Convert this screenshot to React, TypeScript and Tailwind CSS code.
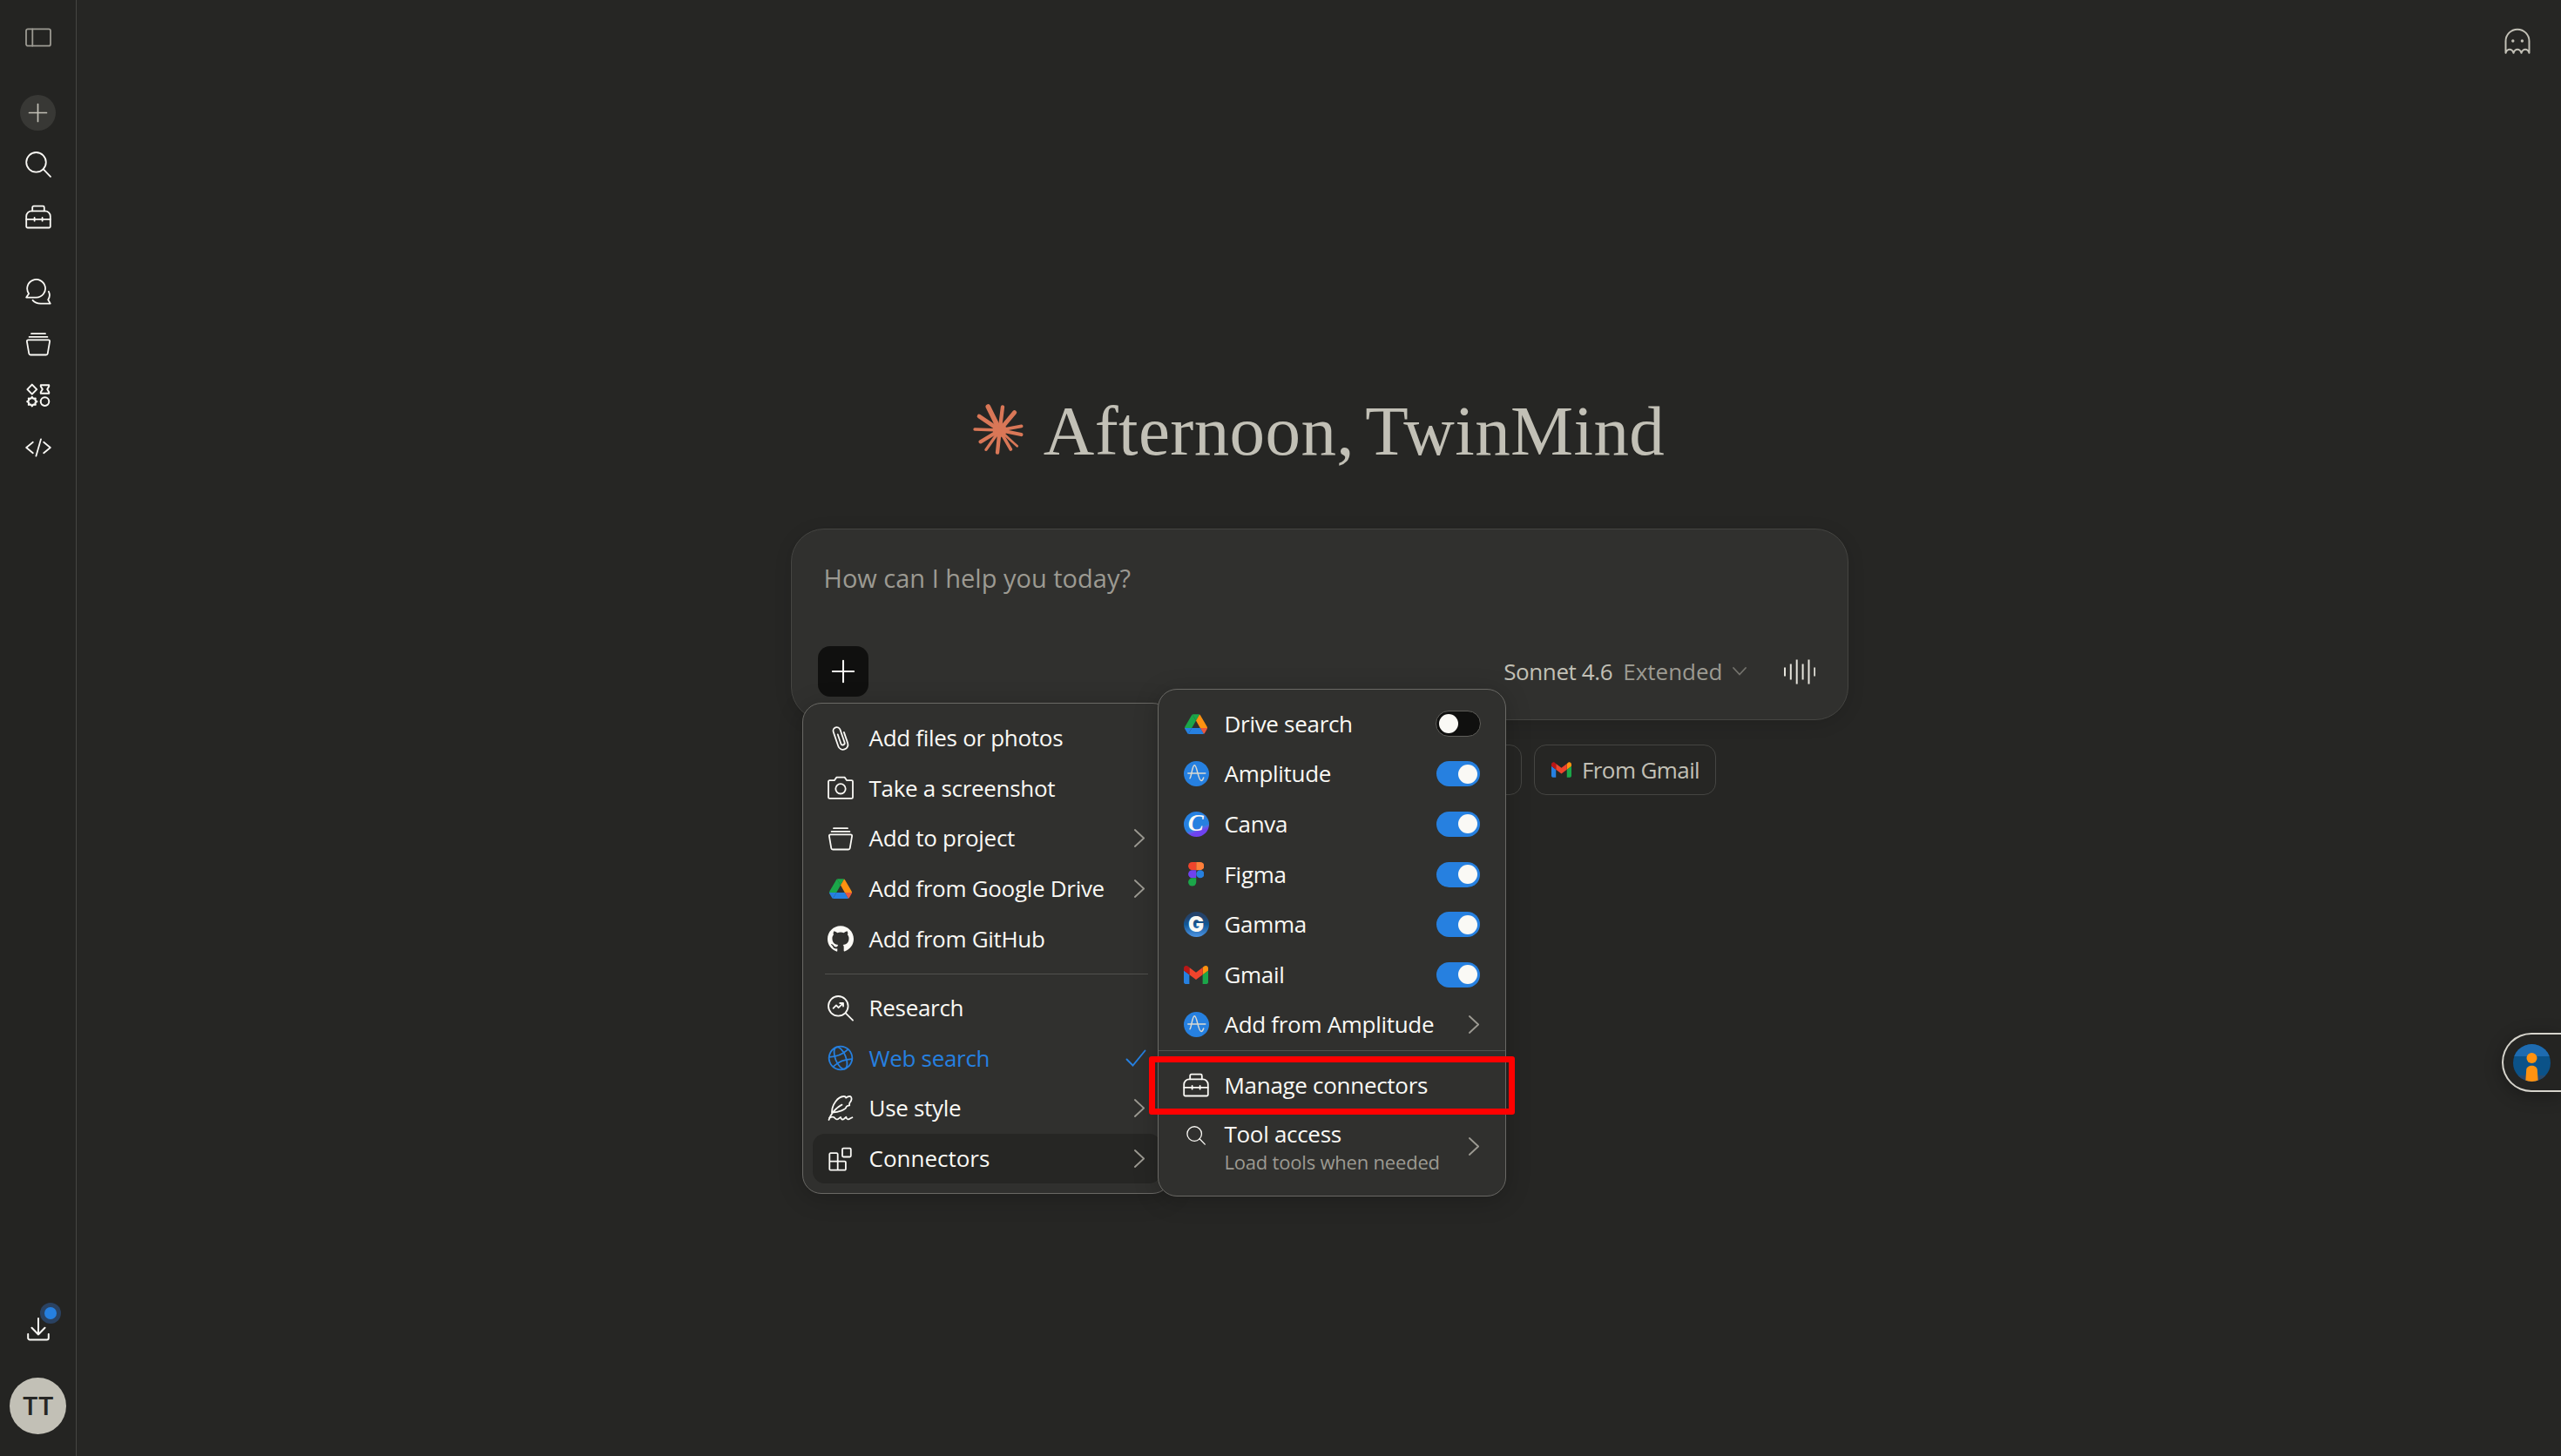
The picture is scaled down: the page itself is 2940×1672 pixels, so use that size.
import React from 'react';
import { SiGithub } from 'react-icons/si';

type IconProps = { className?: string };

const Stroke = ({
  children,
  className = 'size-[30px]',
  width = 1.8,
}: {
  children: React.ReactNode;
  className?: string;
  width?: number;
}) => (
  <svg
    viewBox="0 0 30 30"
    fill="none"
    stroke="currentColor"
    strokeWidth={width}
    strokeLinecap="round"
    strokeLinejoin="round"
    className={`shrink-0 ${className}`}
  >
    {children}
  </svg>
);

const PanelIcon = () => (
  <Stroke>
    <rect x="1" y="5.3" width="28" height="19.4" rx="2" />
    <path d="M8.3 5.3v19.4" />
  </Stroke>
);

const PlusIcon = ({ className }: IconProps) => (
  <Stroke className={className} width={2.2}>
    <path d="M15 2v26M2 15h26" />
  </Stroke>
);

const SearchIcon = ({ className }: IconProps) => (
  <Stroke className={className}>
    <circle cx="12.5" cy="12.3" r="11.3" />
    <path d="M20.6 20.2l8.4 8.6" />
  </Stroke>
);

const ToolboxIcon = () => (
  <Stroke>
    <path d="M1.2 14.3a6 6 0 0 1 6-6h15.6a6 6 0 0 1 6 6V26a1.5 1.5 0 0 1-1.5 1.5H2.7A1.5 1.5 0 0 1 1.2 26z" />
    <path d="M8.2 8.3V4.2a1.5 1.5 0 0 1 1.5-1.5h10.6a1.5 1.5 0 0 1 1.5 1.5v4.1M1.2 17.8h27.6M10.6 15.9v3.8M19.6 15.9v3.8" />
  </Stroke>
);

const ChatsIcon = () => (
  <Stroke>
    <path d="M12.7 21.6H1.2l2.9-4.4A10.4 10.3 0 1 1 12.7 21.6z" />
    <path d="M8.6 24.8c2.2 2.6 5.2 3.8 9 3.8h11.2l-2.6-4.4c2-3 2.2-6.4.7-9.4" />
  </Stroke>
);

const ProjectsIcon = () => (
  <Stroke>
    <path d="M7 3.2h16M4.6 6.9h20.8M3.4 10.4h23.2c1 0 1.6.8 1.5 1.7l-2.4 14a1.8 1.8 0 0 1-1.8 1.4H6.1a1.8 1.8 0 0 1-1.8-1.4l-2.4-14c-.1-.9.5-1.7 1.5-1.7z" />
  </Stroke>
);

const ArtifactsIcon = () => (
  <Stroke width={2}>
    <path d="M7.8 2.6l5.4 5.5-5.4 5.5-5.4-5.5zM17.8 3.2h9.4v1.6l-2 3.2 2 3.2v1.6h-9.4v-1.6l2-3.2-2-3.2z" />
    <path d="M7.8 16.8l1.5 2 2.5-.4-.4 2.3 2 1.4-2 1.4.4 2.3-2.5-.4-1.5 2-1.5-2-2.5.4.4-2.3-2-1.4 2-1.4-.4-2.3 2.5.4z" />
    <circle cx="22.5" cy="22.1" r="4.8" />
  </Stroke>
);

const CodeIcon = () => (
  <Stroke>
    <path d="M8.8 8.8L1.2 15l7.6 6.2M21.2 8.8l7.6 6.2-7.6 6.2M18 5.3l-5.6 19.4" />
  </Stroke>
);

const DownloadIcon = () => (
  <Stroke width={2}>
    <path d="M15 2v18.5M7.5 12.8l7.5 7.7 7.5-7.7M3.2 20v4.5a2 2 0 0 0 2 2h19.6a2 2 0 0 0 2-2V20" />
  </Stroke>
);

const GhostIcon = () => (
  <Stroke width={2}>
    <path d="M1.5 28.8V15.2a13.5 13.5 0 0 1 27 0v13.6c-2-5.3-7-5.3-9 0-2-5.3-7-5.3-9 0-2-5.3-7-5.3-9 0z" />
    <circle cx="9.8" cy="15" r="1" fill="currentColor" strokeWidth="1.4" />
    <circle cx="20.4" cy="15" r="1" fill="currentColor" strokeWidth="1.4" />
  </Stroke>
);

const ClipIcon = () => (
  <Stroke>
    <path
      transform="rotate(-19 15 15)"
      d="M21 9.5V22.6a5.7 5.7 0 0 1-11.4 0V5.2a4.1 4.1 0 0 1 8.2 0v15.6a2.2 2.2 0 0 1-4.4 0V9.5"
    />
  </Stroke>
);

const CameraIcon = () => (
  <Stroke>
    <path d="M2.4 6.2h5.4l2.6-3.6h9.2l2.6 3.6h5.4c.8 0 1.4.6 1.4 1.4v17.8c0 .8-.6 1.4-1.4 1.4H2.4c-.8 0-1.4-.6-1.4-1.4V7.6c0-.8.6-1.4 1.4-1.4z" />
    <circle cx="15" cy="15.8" r="5.7" />
  </Stroke>
);

const ResearchIcon = () => (
  <Stroke>
    <circle cx="12.3" cy="12.3" r="11.3" />
    <path d="M20.7 20.4l8.3 8.3M6.6 14.8l3.4-3.4 2.6 2.8 5.2-5M14.2 9h3.8v3.6" />
  </Stroke>
);

const GlobeIcon = () => (
  <Stroke>
    <g transform="rotate(-22 15 15)">
      <circle cx="15" cy="15" r="13.3" />
      <ellipse cx="15" cy="15" rx="6" ry="13.3" />
      <path d="M3.4 9c7.4 2.8 15.8 2.8 23.2 0M3.4 21c7.4-2.8 15.8-2.8 23.2 0" />
    </g>
  </Stroke>
);

const StyleIcon = () => (
  <Stroke>
    <path d="M1.5 28c2.4-7.2 7-13 15-17.4M5 19.4C4.8 10.5 12 1.2 18.4 1c1.7-.1 2.4.5 2.8 1.7 1.5-1.2 3.4-1.9 5-1.6 2.2 1.4 1.6 5-.8 7.3-.4 1.4-.5 2-.2 3-2.5.4-3.3.9-3.6 1.5-.4 3.5-8.6 6.2-16.5 6.8" />
    <path d="M2.2 25.6c2.5-1.3 5.3-1.2 6.5.6 1.2 1.5 2.8 1.7 4 .4l2.3-1.7c.5 2.5 2.2 3.3 4 1.9l2.4-2c.5 2.7 2.6 3.3 4.4 1.7l2.6-1.2" />
  </Stroke>
);

const BlocksIcon = () => (
  <Stroke>
    <path d="M3.5 8.2h7a1.2 1.2 0 0 1 1.2 1.2v8.2h8a1.2 1.2 0 0 1 1.2 1.2v7.6a1.2 1.2 0 0 1-1.2 1.2H3.5a1.2 1.2 0 0 1-1.2-1.2v-17a1.2 1.2 0 0 1 1.2-1.2zM2.3 17.6h9.4v10" />
    <rect x="17" y="2.7" width="9.8" height="9.8" rx="1.2" />
  </Stroke>
);

const ChevronRight = () => (
  <svg viewBox="0 0 12 21" fill="none" stroke="currentColor" strokeWidth="1.8" strokeLinecap="round" className="h-[21px] w-3 text-[#9c9a92]">
    <path d="M.9 1l10.2 9.5L.9 20" />
  </svg>
);

const DriveLogo = () => (
  <svg viewBox="0 0 87.3 78" className="h-[23.5px] w-[26px]">
    <path fill="#2680e0" d="m6.6 66.85 3.85 6.65c.8 1.4 1.95 2.5 3.3 3.3l13.75-23.8h-27.5c0 1.55.4 3.1 1.2 4.5z" />
    <path fill="#1ba649" d="m43.65 25-13.75-23.8c-1.35.8-2.5 1.9-3.3 3.3l-25.4 44a9.06 9.06 0 0 0-1.2 4.5h27.5z" />
    <path fill="#e8573f" d="m73.55 76.8c1.35-.8 2.5-1.9 3.3-3.3l1.6-2.75 7.65-13.25c.8-1.4 1.2-2.95 1.2-4.5h-27.5l5.85 11.5z" />
    <path fill="#1ba649" d="m43.65 25 13.75-23.8c-1.35-.8-2.9-1.2-4.5-1.2h-18.5c-1.6 0-3.15.45-4.5 1.2z" />
    <path fill="#2680e0" d="m59.8 53h-32.3l-13.75 23.8c1.35.8 2.9 1.2 4.5 1.2h50.8c1.6 0 3.15-.45 4.5-1.2z" />
    <path fill="#ff9210" d="m73.4 26.5-12.7-22c-.8-1.4-1.95-2.5-3.3-3.3l-13.75 23.8 16.15 28h27.45c0-1.55-.4-3.1-1.2-4.5z" />
  </svg>
);

const AmplitudeLogo = () => (
  <svg viewBox="0 0 29 29" fill="none" stroke="#dcdad2" strokeWidth="1.5" strokeLinecap="round" className="size-[29px]">
    <circle cx="14.5" cy="14.5" r="14.5" fill="#2680e0" stroke="none" />
    <path d="M4.8 14h20M7 19.8C8.8 18 9.6 4.8 12.3 4.8c3 0 4 17.6 7.8 17.6 1.2 0 2-1.6 2.6-3.4" />
  </svg>
);

const CanvaLogo = () => (
  <span className="flex size-[29px] items-center justify-center rounded-full bg-linear-160 from-[#2680e0] from-62% to-[#6f42f0] to-74% pr-px pb-[2px] font-['Liberation_Serif',serif] text-[27px] leading-none font-bold text-[#faf9f5] italic">
    C
  </span>
);

const FigmaLogo = () => (
  <svg viewBox="0 0 18 27" className="h-[27.5px] w-[18.5px]">
    <path fill="#f0442c" d="M9 0H4.5a4.5 4.5 0 0 0 0 9H9z" />
    <path fill="#ff7f3a" d="M9 0h4.5a4.5 4.5 0 0 1 0 9H9z" />
    <path fill="#6f42f0" d="M9 9H4.5a4.5 4.5 0 0 0 0 9H9z" />
    <circle cx="13.5" cy="13.5" r="4.5" fill="#2680e0" />
    <path fill="#1ba649" d="M9 18H4.5A4.5 4.5 0 1 0 9 22.5z" />
  </svg>
);

const GammaLogo = () => (
  <span className="flex size-[29px] items-center justify-center rounded-full bg-linear-to-b from-[#24436b] from-20% via-[#0f5796] via-50% to-[#4d96e6] font-[Inter] text-[24px] leading-none font-black text-[#faf9f5]">
    G
  </span>
);

const GmailLogo = ({ className = 'h-[21px] w-7' }: IconProps) => (
  <svg viewBox="52 42 88 66" className={className}>
    <path fill="#2680e0" d="M58 108h14V74L52 59v43c0 3.32 2.69 6 6 6" />
    <path fill="#1ba649" d="M120 108h14c3.32 0 6-2.69 6-6V59l-20 15" />
    <path fill="#ff9210" d="M120 48v26l20-15v-8c0-7.42-8.47-11.65-14.4-7.2" />
    <path fill="#f0442c" d="M72 74V48l24 18 24-18v26L96 92" />
    <path fill="#b91616" d="M52 51v8l20 15V48l-5.6-4.2c-5.94-4.45-14.4-.22-14.4 7.2" />
  </svg>
);

const rays = [
  [90, 37, 17],
  [140, 38, 13],
  [181, 57, 15],
  [205, 104, 11],
  [204, 133, 13],
  [190, 173, 8],
  [168, 184, 11],
  [122, 195, 13],
  [83, 185, 10],
  [64, 158, 13],
  [44, 115, 10],
  [59, 70, 14],
];

const Starburst = () => (
  <svg viewBox="38 28 174 174" stroke="#d97757" strokeLinecap="round" className="size-[58px] shrink-0">
    <circle cx="130" cy="118" r="24" fill="#d97757" stroke="none" />
    {rays.map(([x, y, w]) => (
      <line key={`${x}-${y}`} x1="130" y1="118" x2={x} y2={y} strokeWidth={w} />
    ))}
  </svg>
);

const Toggle = ({ on }: { on: boolean }) =>
  on ? (
    <span className="flex h-[29px] w-[50px] items-center justify-end rounded-full bg-[#2680e0] pr-[3px]">
      <span className="size-[22px] rounded-full bg-[#faf9f5]" />
    </span>
  ) : (
    <span className="flex h-[30px] w-[52px] items-center rounded-full border border-[#5f5e5a] bg-[#10100f] pl-[3px]">
      <span className="size-[22px] rounded-full bg-[#faf9f5]" />
    </span>
  );

const SideButton = ({ children }: { children: React.ReactNode }) => (
  <button className="flex h-[59.5px] w-full items-center justify-center">{children}</button>
);

const Sidebar = () => (
  <aside className="flex h-full w-[88px] shrink-0 flex-col items-center border-r border-[#454542] bg-[#242422] pt-[13px] pb-[25px] text-[#faf9f5]">
    <div className="w-full text-[#9c9a92]">
      <SideButton>
        <PanelIcon />
      </SideButton>
    </div>
    <nav className="mt-[27.5px] w-full">
      <SideButton>
        <span className="flex size-[41px] items-center justify-center rounded-full bg-[#383835] text-[#c2c0b6]">
          <PlusIcon className="size-[23px]" />
        </span>
      </SideButton>
      <SideButton>
        <SearchIcon />
      </SideButton>
      <SideButton>
        <ToolboxIcon />
      </SideButton>
    </nav>
    <nav className="mt-[27px] w-full">
      <SideButton>
        <ChatsIcon />
      </SideButton>
      <SideButton>
        <ProjectsIcon />
      </SideButton>
      <SideButton>
        <ArtifactsIcon />
      </SideButton>
      <SideButton>
        <CodeIcon />
      </SideButton>
    </nav>
    <button className="relative mt-auto mb-[40px]">
      <DownloadIcon />
      <span className="absolute -top-[16px] left-[17px] size-6 rounded-full bg-[#2a4262] p-[5px]">
        <span className="block size-full rounded-full bg-[#2680e0]" />
      </span>
    </button>
    <div className="flex size-[65px] items-center justify-center rounded-full bg-[#c2c0b6] font-[Inter] text-[28px] font-semibold tracking-[-0.5px] text-[#262624]">
      TT
    </div>
  </aside>
);

const MenuRow = ({
  icon,
  label,
  end,
  className = 'text-[#faf9f5]',
}: {
  icon: React.ReactNode;
  label: string;
  end?: React.ReactNode;
  className?: string;
}) => (
  <div className={`flex h-[57.6px] items-center rounded-[14px] pl-[17px] ${className}`}>
    <span className="flex w-[30px] justify-center">{icon}</span>
    <span className="ml-[17.5px] flex-1 whitespace-nowrap">{label}</span>
    {end}
  </div>
);

const Arrow = () => (
  <span className="mr-[19px]">
    <ChevronRight />
  </span>
);

const AttachMenu = () => (
  <div className="absolute top-[200px] left-[13px] h-[564px] w-[424px] rounded-[22px] border border-[#6a6965] bg-[#30302e] p-[11px] text-[26px] tracking-[-0.3px] shadow-[0_4px_28px_rgba(0,0,0,0.22)]">
    <MenuRow icon={<ClipIcon />} label="Add files or photos" />
    <MenuRow icon={<CameraIcon />} label="Take a screenshot" />
    <MenuRow icon={<ProjectsIcon />} label="Add to project" end={<Arrow />} />
    <MenuRow icon={<DriveLogo />} label="Add from Google Drive" end={<Arrow />} />
    <MenuRow icon={<SiGithub size={30} />} label="Add from GitHub" />
    <hr className="mt-[11px] mr-[15px] mb-[10px] ml-[14px] border-[#51514e]" />
    <MenuRow icon={<ResearchIcon />} label="Research" />
    <MenuRow
      icon={<GlobeIcon />}
      label="Web search"
      className="text-[#2680e0]"
      end={
        <svg viewBox="0 0 24 20" fill="none" stroke="currentColor" strokeWidth="1.9" strokeLinecap="round" className="mr-[17px] h-5 w-6">
          <path d="M1.5 11.5l7 7L22.5 1.5" />
        </svg>
      }
    />
    <MenuRow icon={<StyleIcon />} label="Use style" end={<Arrow />} />
    <MenuRow icon={<BlocksIcon />} label="Connectors" end={<Arrow />} className="bg-[#262624] tracking-normal text-[#faf9f5]" />
  </div>
);

const connectors = [
  { label: 'Drive search', icon: <DriveLogo />, on: false },
  { label: 'Amplitude', icon: <AmplitudeLogo />, on: true },
  { label: 'Canva', icon: <CanvaLogo />, on: true },
  { label: 'Figma', icon: <FigmaLogo />, on: true },
  { label: 'Gamma', icon: <GammaLogo />, on: true },
  { label: 'Gmail', icon: <GmailLogo />, on: true },
];

const ConnectorsMenu = () => (
  <div className="absolute top-[184px] left-[421px] h-[583px] w-[400px] rounded-[22px] border border-[#6a6965] bg-[#30302e] py-[10.5px] text-[26px] tracking-[-0.3px] text-[#faf9f5] shadow-[0_4px_28px_rgba(0,0,0,0.22)]">
    <div className="px-[11px]">
      {connectors.map((c) => (
        <MenuRow
          key={c.label}
          icon={c.icon}
          label={c.label}
          end={
            <span className={c.on ? 'mr-[18px]' : 'mr-[17px]'}>
              <Toggle on={c.on} />
            </span>
          }
        />
      ))}
      <MenuRow icon={<AmplitudeLogo />} label="Add from Amplitude" end={<Arrow />} />
    </div>
    <hr className="mb-[11px] border-[#51514e]" />
    <div className="relative px-[11px]">
      <MenuRow icon={<ToolboxIcon />} label="Manage connectors" />
      <div className="absolute -top-[4.5px] -left-[11px] h-[67px] w-[420px] rounded-[3px] border-[7px] border-[#ff0000]" />
    </div>
    <div className="flex items-center pt-[9px] pl-[28px]">
      <span className="flex w-[30px] justify-center self-start pt-[9px]">
        <SearchIcon className="size-[22px]" />
      </span>
      <div className="ml-[17.5px] flex-1 whitespace-nowrap">
        <p className="leading-[36px]">Tool access</p>
        <p className="text-[22px] leading-[29px] tracking-[-0.2px] text-[#9c9a92]">Load tools when needed</p>
      </div>
      <span className="mr-[30px]">
        <ChevronRight />
      </span>
    </div>
  </div>
);

const bars = [
  [1, 9.5, 19.5],
  [7.8, 5.5, 23.5],
  [14.7, 0.5, 28.5],
  [21.6, 5.5, 23.5],
  [28.5, 0.5, 28.5],
  [35.3, 9.5, 19.5],
];

const Composer = () => (
  <div className="flex h-[220px] flex-col justify-between rounded-[38px] border border-[#454542] bg-[#30302e] pt-[34px] pr-[37px] pb-[26px] pl-[30px] shadow-[0_4px_20px_rgba(0,0,0,0.12)]">
    <p className="pl-[6.5px] text-[29px] leading-[44px] text-[#9c9a92]">How can I help you today?</p>
    <div className="flex items-center">
      <button className="flex size-[58px] items-center justify-center rounded-[14px] bg-[#10100f] text-[#faf9f5]">
        <PlusIcon className="size-[28px]" />
      </button>
      <span className="ml-auto text-[26px] tracking-[-0.4px] text-[#c2c0b6]">Sonnet 4.6</span>
      <span className="ml-[12px] text-[26px] text-[#9c9a92]">Extended</span>
      <svg viewBox="0 0 16 10" fill="none" stroke="#73726c" strokeWidth="1.8" strokeLinecap="round" className="ml-[11px] h-[10px] w-4">
        <path d="M1 1l7 7.5L15 1" />
      </svg>
      <svg viewBox="0 0 36.5 29" stroke="#e6e4dc" strokeWidth="2" className="ml-[43px] h-[29px] w-[36.5px]">
        {bars.map(([x, y1, y2]) => (
          <line key={x} x1={x} x2={x} y1={y1} y2={y2} />
        ))}
      </svg>
    </div>
  </div>
);

const HelperWidget = () => (
  <div className="absolute top-[1186px] right-0 flex h-[68px] w-[68px] items-center rounded-l-full border-2 border-r-0 border-[#d6d4cc] bg-[#242422] pl-[11px] shadow-[0_4px_20px_rgba(0,0,0,0.3)]">
    <svg viewBox="0 0 43 43" className="size-[43px]">
      <defs>
        <clipPath id="helper">
          <circle cx="21.5" cy="21.5" r="21.5" />
        </clipPath>
      </defs>
      <g clipPath="url(#helper)">
        <rect width="43" height="43" fill="#0b5288" />
        <rect width="43" height="14" fill="#1e6bb0" />
        <rect y="36" width="43" height="7" fill="#294a6e" />
        <circle cx="21.5" cy="16" r="6" fill="#ff9210" />
        <path d="M14.3 42.5l.9-13c.2-6.5 12.4-6.5 12.6 0l.9 13c-4 .9-10.4.9-14.400 0z" fill="#ff9210" />
      </g>
    </svg>
  </div>
);

const App = () => {
  return (
    <div className="relative flex h-[1672px] w-[2940px] overflow-hidden bg-[#262624] font-['Open_Sans',sans-serif]">
      <Sidebar />
      <main className="flex flex-1 flex-col items-center">
        <header className="flex h-[100px] w-full justify-end pt-[32px] pr-[35px] text-[#c2c0b6]">
          <GhostIcon />
        </header>

        <div className="mt-[348px] flex h-[90px] items-center gap-[23px]">
          <Starburst />
          <h1 className="pt-[4px] font-['Liberation_Serif',serif] text-[81px] leading-[90px] tracking-[0.4px] [word-spacing:-7px] whitespace-nowrap text-[#c2c0b6]">
            Afternoon, TwinMind
          </h1>
        </div>

        <section className="relative mt-[69px] ml-[2px] w-[1214px]">
          <Composer />
          <div className="mt-[28px] flex h-[58px] justify-end gap-[14px] pr-[152px] text-[26px] text-[#c2c0b6]">
            <div className="w-[200px] rounded-[14px] border border-[#454542]" />
            <div className="flex w-[209px] items-center rounded-[14px] border border-[#454542] pl-[19px]">
              <GmailLogo className="h-[18px] w-[23px]" />
              <span className="ml-[12px] tracking-[-0.6px] whitespace-nowrap">From Gmail</span>
            </div>
          </div>
          <AttachMenu />
          <ConnectorsMenu />
        </section>
      </main>
      <HelperWidget />
    </div>
  );
};

export default App;
